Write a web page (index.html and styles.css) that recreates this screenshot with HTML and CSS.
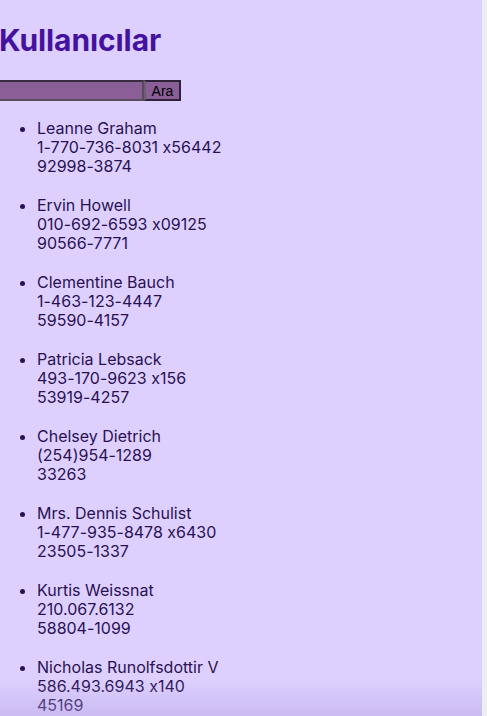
FILE: index.html
```html
<!DOCTYPE html>
<html lang="tr">
<head>
<meta charset="utf-8">
<title>Kullanıcılar</title>
<link rel="stylesheet" href="styles.css">
</head>
<body>
<div class="page">
  <h1 class="title">Kullanıcılar</h1>
  <form class="search">
    <input class="search-input" type="text">
    <button class="search-btn" type="button">Ara</button>
  </form>
  <ul class="users">
    <li>Leanne Graham<br>1-770-736-8031 x56442<br>92998-3874</li>
    <li>Ervin Howell<br>010-692-6593 x09125<br>90566-7771</li>
    <li>Clementine Bauch<br>1-463-123-4447<br>59590-4157</li>
    <li>Patricia Lebsack<br>493-170-9623 x156<br>53919-4257</li>
    <li>Chelsey Dietrich<br>(254)954-1289<br>33263</li>
    <li>Mrs. Dennis Schulist<br>1-477-935-8478 x6430<br>23505-1337</li>
    <li>Kurtis Weissnat<br>210.067.6132<br>58804-1099</li>
    <li>Nicholas Runolfsdottir V<br>586.493.6943 x140<br>45169</li>
  </ul>
</div>
<div class="bottom-shade"></div>
</body>
</html>
```
FILE: styles.css
```css
html, body {
  margin: 0;
  padding: 0;
  height: 100%;
  overflow: hidden;
  background: #eeedf2;
}
.page {
  margin-right: 5px;
  min-height: 100%;
  background: #ddd0fe;
  font-family: Inter, "Noto Sans", sans-serif;
  font-feature-settings: "calt" 0;
  color: #2a1052;
  overflow: hidden;
}
.title {
  margin: 25px 0 0 -1px;
  font-size: 30px;
  line-height: 31px;
  font-weight: 700;
  color: #4512a0;
  letter-spacing: -0.1px;
}
.search {
  display: flex;
  margin-top: 24px;
  height: 21px;
}
.search-input {
  box-sizing: border-box;
  width: 144px;
  height: 21px;
  margin: 0;
  background: #8a5e96;
  border: 2px solid #5a4a5e;
  border-top-color: #3a2c40;
  border-left: 0;
  padding: 0;
}
.search-btn {
  box-sizing: border-box;
  width: 37px;
  height: 21px;
  margin: 0;
  padding: 0;
  background: #8a5e96;
  border: 2px solid #2e2238;
  border-left-color: #6a6070;
  font-family: "Liberation Sans", Arial, sans-serif;
  font-size: 14px;
  color: #000;
}
.users {
  margin: 18px 0 0;
  padding-left: 37px;
  font-size: 16px;
  line-height: 19px;
}
.users li {
  margin-bottom: 20px;
}
.bottom-shade {
  position: fixed;
  left: 0;
  right: 5px;
  bottom: 0;
  height: 36px;
  background: linear-gradient(to bottom, rgba(190, 170, 235, 0), rgba(180, 160, 228, 0.45));
  pointer-events: none;
}
```
